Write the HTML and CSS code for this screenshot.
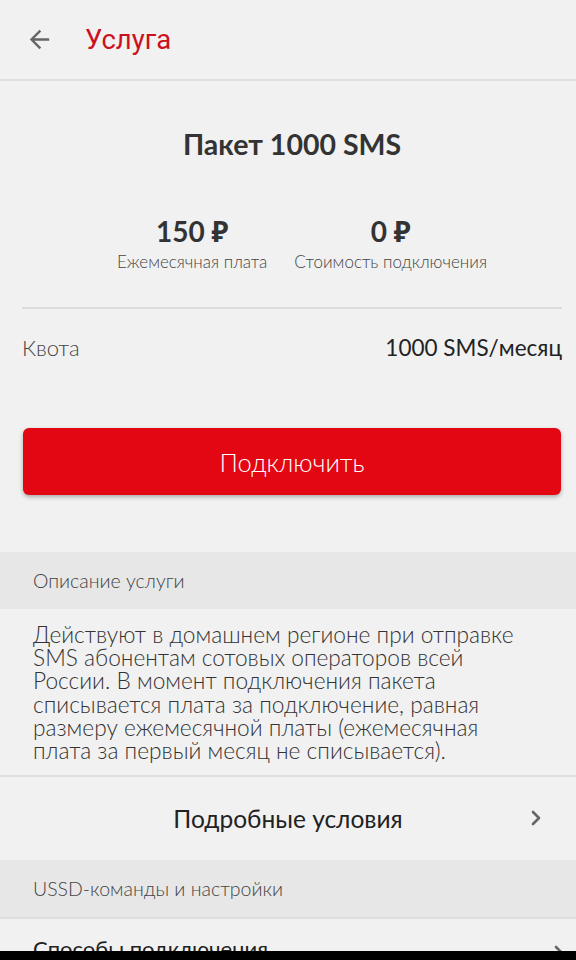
FILE: index.html
```html
<!DOCTYPE html>
<html lang="ru">
<head>
<meta charset="utf-8">
<link rel="stylesheet" href="styles.css">
</head>
<body>
<div class="screen">
  <header class="toolbar">
    <svg class="back" width="24" height="24" viewBox="0 0 24 24"><path d="M20 11H7.83l5.59-5.59L12 4l-8 8 8 8 1.41-1.41L7.83 13H20v-2z" fill="#666"/></svg>
    <h1 class="title">Услуга</h1>
  </header>
  <main class="content">
    <section class="summary">
      <h2 class="name">Пакет 1000 SMS</h2>
      <div class="prices">
        <div class="price">
          <div class="amount">150 ₽</div>
          <div class="label">Ежемесячная плата</div>
        </div>
        <div class="price">
          <div class="amount">0 ₽</div>
          <div class="label">Стоимость подключения</div>
        </div>
      </div>
    </section>
    <div class="quota">
      <span class="quota-key">Квота</span>
      <span class="quota-val">1000 SMS/месяц</span>
    </div>
    <div class="action">
      <button class="btn">Подключить</button>
    </div>
    <div class="sect">Описание услуги</div>
    <p class="desc">Действуют в домашнем регионе при отправке SMS абонентам сотовых операторов всей России. В момент подключения пакета списывается плата за подключение, равная размеру ежемесячной платы (ежемесячная плата за первый месяц не списывается).</p>
    <div class="more">
      <span class="more-text">Подробные условия</span>
      <svg class="chev" width="14" height="20" viewBox="0 0 14 20"><path d="M4 4l6 6-6 6" fill="none" stroke="#666" stroke-width="2.6" stroke-linecap="round" stroke-linejoin="round"/></svg>
    </div>
    <div class="sect">USSD-команды и настройки</div>
    <div class="row">
      <span>Способы подключения</span>
      <svg class="chev small" width="14" height="20" viewBox="0 0 14 20"><path d="M4 4l6 6-6 6" fill="none" stroke="#666" stroke-width="2.6" stroke-linecap="round" stroke-linejoin="round"/></svg>
    </div>
  </main>
  <div class="navbar"></div>
</div>
</body>
</html>
```
FILE: styles.css
```css
* { box-sizing: border-box; }
html, body { margin: 0; padding: 0; }
body { background: #f1f1f1; font-family: Lato, "Noto Sans", sans-serif; color: #333; }
.screen { width: 576px; height: 960px; display: flex; flex-direction: column; overflow: hidden; }
.toolbar { height: 81px; flex: none; display: flex; align-items: center; padding-left: 25px; border-bottom: 2px solid #dedede; }
.back { width: 29px; height: 29px; }
.title { margin: 0 0 0 31px; font-family: Roboto, sans-serif; font-weight: 400; font-size: 27.5px; color: #cc1020; }
.content { flex: 1; overflow: hidden; }
.summary { margin: 0 14px 0 22px; border-bottom: 2px solid #dcdcdc; padding-top: 46px; height: 228px; }
.name { margin: 0; text-align: center; font-size: 28.5px; font-weight: 700; color: #333; line-height: 34px; }
.prices { display: flex; justify-content: center; gap: 27px; margin-top: 53px; padding-left: 20px; }
.price { text-align: center; }
.amount { font-size: 28px; font-weight: 700; line-height: 34px; color: #333; }
.label { font-size: 17px; font-weight: 300; color: #444; line-height: 22px; margin-top: 3px; }
.quota { display: flex; justify-content: space-between; align-items: center; margin: 0 14px 0 22px; height: 76px; font-size: 22px; }
.quota-key { color: #444; font-weight: 300; }
.quota-val { color: #222; font-weight: 400; font-size: 22.5px; }
.action { padding: 43px 15px 57px 23px; }
.btn { display: block; width: 100%; height: 67px; border: none; border-radius: 6px; background: #e30613; color: #fff; font-family: Lato, sans-serif; font-weight: 300; font-size: 25.5px; box-shadow: 0 2px 4px rgba(0,0,0,0.3); }
.sect { background: #e7e7e7; height: 57px; display: flex; align-items: center; padding-left: 33px; font-size: 19.5px; font-weight: 300; color: #444; }
.desc { margin: 0; padding: 14px 48px 13px 33px; font-size: 22.7px; font-weight: 300; line-height: 23.2px; color: #333; border-bottom: 2px solid #dedede; }
.more { height: 83px; display: flex; align-items: center; justify-content: center; position: relative; font-size: 24.5px; color: #222; }
.chev { position: absolute; right: 33px; top: 31px; }
.row { position: relative; padding: 16px 33px; font-size: 22px; color: #222; border-top: 2px solid #dedede; }
.chev.small { top: 24px; right: 10px; }
.navbar { height: 9px; flex: none; background: #000; }
```
